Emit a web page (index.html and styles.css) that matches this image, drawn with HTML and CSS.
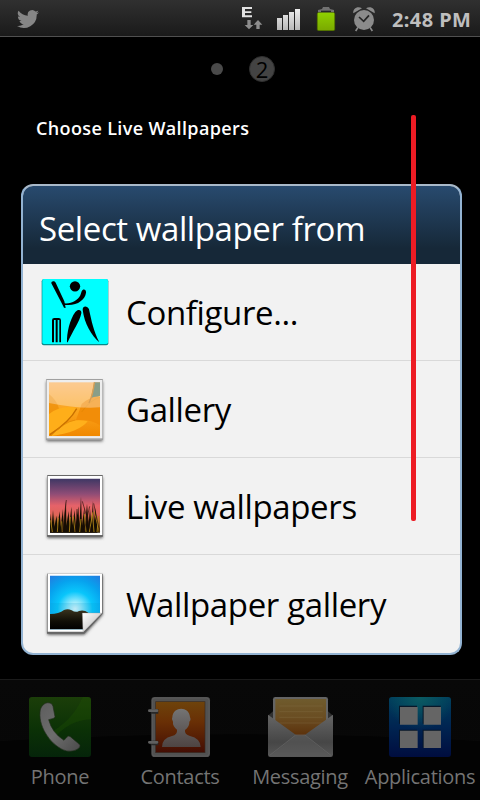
FILE: index.html
```html
<!DOCTYPE html>
<html lang="en">
<head>
<meta charset="utf-8">
<title>Select wallpaper</title>
<link rel="stylesheet" href="styles.css">
</head>
<body>
<div class="phone">
  <header class="status">
    <svg class="bird" viewBox="0 0 24 24"><path fill="#868686" d="M24 4.6a10 10 0 0 1-2.8.8 5 5 0 0 0 2.1-2.7 10 10 0 0 1-3.1 1.2 4.9 4.9 0 0 0-8.4 4.5A14 14 0 0 1 1.7 3.1a4.9 4.9 0 0 0 1.5 6.6 5 5 0 0 1-2.2-.6 4.9 4.9 0 0 0 3.9 4.9 5 5 0 0 1-2.2.1 4.9 4.9 0 0 0 4.6 3.4A10 10 0 0 1 0 19.5 14 14 0 0 0 21.5 7.1 10 10 0 0 0 24 4.6z"/></svg>
    <svg class="signals" viewBox="0 0 480 108">
      <defs>
        <linearGradient id="sig" x2="0" y2="1"><stop stop-color="#eee"/><stop offset="1" stop-color="#b8b8b8"/></linearGradient>
        <linearGradient id="bat" x2="0" y2="1"><stop stop-color="#8fd000"/><stop offset="1" stop-color="#7aa900"/></linearGradient>
      </defs>
      <path fill="#e2e2e2" d="M36 21h30v6H45v7h19v5H45v7h21v6H36z"/>
      <path fill="#8d8d8d" d="M52 60h10v15h8L57 88 44 75h8zM79 87h10V74h8L84 60 71 74h8z"/>
      <path fill="url(#sig)" d="M141 54h15v36h-15zM159 45h15v45h-15zM177 36h15v54h-15zM195 27h15v63h-15z"/>
      <path fill="#727272" d="M264 38v-8l12-3 3-6h18l3 6 12 3v8z"/>
      <path fill="#282828" d="M273 32h30v4h-30z"/>
      <rect x="260.500" y="37" width="55" height="56" rx="5" fill="#476100"/>
      <rect x="263" y="38" width="50" height="53" rx="3" fill="url(#bat)"/>
      <circle cx="402" cy="60" r="30" fill="#8b8b8b"/>
      <path stroke="#8b8b8b" stroke-width="5" d="M384 82l-7 11M420 82l7 11"/>
      <path fill="#8b8b8b" d="M370 40c-3-15 14-24 26-15zM434 40c3-15-14-24-26-15z"/>
      <path fill="none" stroke="#252525" stroke-width="5" d="M387 51l14 13 16-18"/>
    </svg>
    <span class="clock">2:48 PM</span>
  </header>

  <div class="pages"><i class="dot"></i><span class="page">2</span></div>
  <p class="hint">Choose Live Wallpapers</p>

  <main class="dialog">
    <h1>Select wallpaper from</h1>
    <ul>
      <li>
        <svg viewBox="39 0 261 291">
          <rect x="95" y="46" width="200" height="198" rx="6" fill="#078a8a"/>
          <rect x="97" y="45" width="197" height="195" rx="5" fill="#00ffff"/>
          <g fill="#000">
            <circle cx="195" cy="67" r="15.500"/>
            <path d="M124 58c-1-7 9-9 13-2l26 56 4 20-5-1-6-12zM162 118c24 2 41-9 49-24l4-12c4-9 14-6 13 4-3 22-29 42-66 36z"/>
            <path d="M171 235c-1-28 8-68 25-91 8-10 20-7 18 4-5 26-25 51-41 87zM218 137c0-12 14-12 19-1 8 36 13 64 31 99-24-22-45-56-50-98z"/>
            <path d="M126 235v-66q0-7 7-7h13q7 0 7 7v66h-5v-67h-5v67h-6v-67h-5v67z"/>
          </g>
        </svg>
        <span>Configure...</span>
      </li>
      <li>
        <svg viewBox="39 291 261 291">
          <defs>
            <linearGradient id="petal" x2="0" y2="1"><stop stop-color="#fbb25e"/><stop offset=".5" stop-color="#fba51d"/><stop offset="1" stop-color="#f18800"/></linearGradient>
            <filter id="sh" x="-20%" y="-20%" width="140%" height="140%"><feGaussianBlur stdDeviation="4"/></filter>
            <clipPath id="gc"><path d="M117 355h153v162H117z"/></clipPath>
          </defs>
          <rect x="109" y="352" width="169" height="180" fill="#666" filter="url(#sh)"/>
          <rect x="108" y="345" width="171" height="183" rx="2" fill="#a0a0a0"/>
          <rect x="110" y="348" width="167" height="175" fill="#eee"/>
          <g clip-path="url(#gc)">
            <path fill="url(#petal)" d="M117 355h153v162H117z"/>
            <path fill="#527050" d="M253 355h17v40q-20 7-31 24z"/>
            <path fill="#e98600" d="M117 390q25 20 31 47l-31 45z" opacity=".55"/>
            <path fill="#ffae19" d="M117 450q38-28 82-18-6 34-82 78z"/>
            <path fill="#f28d08" d="M215 420q35-30 60-20v90q-20-25-77-22z"/>
            <path fill="#ffb01b" d="M122 516q45-59 111-44-25 33-111 44z"/>
            <path fill="none" stroke="#c87000" stroke-width="4" d="M200 434q-20 38-80 78M253 355q-4 36-16 62"/>
            <path fill="none" stroke="#df8500" stroke-width="2" d="M270 400q-30 8-55 44M123 516q38-42 73-48"/>
            <path fill="#fff" opacity=".32" d="M117 355h153v75q-65 5-153-13z"/>
          </g>
        </svg>
        <span>Gallery</span>
      </li>
      <li>
        <svg viewBox="39 24 261 291">
          <defs>
            <linearGradient id="dusk" x2="0" y2="1"><stop stop-color="#3e3764"/><stop offset=".28" stop-color="#8e4c76"/><stop offset=".5" stop-color="#e66269"/><stop offset=".67" stop-color="#df6558"/><stop offset=".85" stop-color="#8b5a20"/><stop offset="1" stop-color="#281c05"/></linearGradient>
          </defs>
          <rect x="112" y="82" width="166" height="182" fill="#555" filter="url(#sh)"/>
          <rect x="111" y="75" width="168" height="186" rx="3" fill="#686868"/>
          <rect x="113" y="78" width="164" height="177" fill="#fff"/>
          <path fill="url(#dusk)" d="M120 86h150v162H120z"/>
          <path fill="#150d03" d="M120 248v-58l5 42 4-52 4 51 7-34 2 35 7-48 3 48 7-55 1 54 8-78 1 75 7-45 2 44 6-57 3 56 7-46 2 50 9-61 3 58 5-87 3 88 7-57 2 55 6-65 5 60 4-45 4 46 5-70 2 73 5-51 6 50v24z"/>
          <path fill="none" stroke="#b58b16" stroke-width="2.500" d="M127 246l-5-35M142 246l3-42M157 246l-2-32M178 246l3-45M195 246l-5-47M209 246l4-39M228 246l-5-54M238 246l9-52M252 246l-5-59M261 246l5-48M268 246l-15-61"/>
          <path fill="none" stroke="#30150d" stroke-width="2" d="M217 154l27 93M251 160l18 86M169 150l-11 95M239 169l-17 76M201 177l-6 70"/>
        </svg>
        <span>Live wallpapers</span>
      </li>
      <li>
        <svg viewBox="39 315 261 294">
          <defs>
            <radialGradient id="sun" gradientUnits="userSpaceOnUse" cx="195" cy="477" r="125"><stop stop-color="#f0feff"/><stop offset=".15" stop-color="#a5edfc"/><stop offset=".42" stop-color="#09c6fb"/><stop offset=".7" stop-color="#07a2ee"/><stop offset="1" stop-color="#237be0"/></radialGradient>
            <linearGradient id="hill" x2="0" y2="1"><stop stop-color="#39331e"/><stop offset=".6" stop-color="#100e06"/><stop offset="1" stop-color="#000"/></linearGradient>
            <linearGradient id="curl" x2="1" y2="1"><stop stop-color="#fff"/><stop offset=".55" stop-color="#d5d5d5"/></linearGradient>
          </defs>
          <path fill="#555" filter="url(#sh)" d="M112 376h166v118l-55 60H112z"/>
          <path fill="#666" d="M111 371h167v120l-55 60H111z"/>
          <path fill="#fff" d="M113 371h163v117l-56 57H113z"/>
          <path fill="url(#sun)" d="M120 377h150v111l-49 50H120z"/>
          <path fill="#079bd0" opacity=".2" d="M120 459h150v30H120z"/>
          <path fill="url(#hill)" d="M120 492q27 0 42-12 12-5 23 1 12 8 22 2 14-5 28 5l-15 50H120z"/>
          <path fill="url(#curl)" stroke="#999" stroke-width="1" d="M217 489h58l-56 57z"/>
        </svg>
        <span>Wallpaper gallery</span>
      </li>
    </ul>
  </main>

  <nav class="dock">
    <div class="app">
      <svg viewBox="0 30 360 252">
        <defs>
          <linearGradient id="gr" x2="0" y2="1"><stop stop-color="#1b3e09"/><stop offset=".55" stop-color="#0b3106"/><stop offset="1" stop-color="#05240a"/></linearGradient>
          <linearGradient id="hs" x2="1" y2="1"><stop stop-color="#5d5d5d"/><stop offset=".5" stop-color="#6d6d6d"/><stop offset="1" stop-color="#4a4a4a"/></linearGradient>
        </defs>
        <rect x="87" y="81" width="186" height="180" rx="9" fill="url(#gr)"/>
        <path fill="#205604" opacity=".3" d="M248 81h16q9 0 9 9v58q-70 2-120 67l-15-20q80-40 110-114z"/>
        <path fill="url(#hs)" stroke="#202c1b" stroke-width="2" d="M125 110q10-15 25-11 7 1 9 10l6 31q0 5-8 6l-11 3q10 39 46 62l9-10q5-5 10-1l26 22q6 5 1 11-13 13-38 10c-44-12-84-70-80-115 0-8 2-13 5-18z"/>
      </svg>
      <span>Phone</span>
    </div>
    <div class="app">
      <svg viewBox="360 30 360 252">
        <defs>
          <linearGradient id="or" x2="0" y2="1"><stop stop-color="#6e430b"/><stop offset=".4" stop-color="#692f05"/><stop offset="1" stop-color="#430d03"/></linearGradient>
          <linearGradient id="man" x2="0" y2="1"><stop stop-color="#747474"/><stop offset="1" stop-color="#4e4442"/></linearGradient>
        </defs>
        <rect x="454" y="81" width="176" height="180" rx="10" fill="#515151"/>
        <rect x="457" y="84" width="170" height="174" rx="8" fill="none" stroke="#5f5f5f" stroke-width="2"/>
        <rect x="467" y="95" width="148" height="153" fill="url(#or)" stroke="#382c25" stroke-width="2"/>
        <path fill="url(#man)" d="M486 231q0-26 30-33 17-4 15-19-14-12-12-24-6-6-2-13c2-34 51-34 53 0q4 8-2 13 1 15-13 25-2 14 15 18 31 7 32 33z"/>
        <path stroke="#292929" stroke-width="14" d="M452 124h23M452 219h23"/>
        <path stroke="#606060" stroke-width="8" stroke-linecap="round" d="M448 122h23M448 217h23"/>
      </svg>
      <span>Contacts</span>
    </div>
    <div class="app">
      <svg viewBox="0 30 360 252">
        <defs>
          <linearGradient id="pa" x2="0" y2="1"><stop stop-color="#6f5b2d"/><stop offset=".5" stop-color="#6a4d22"/><stop offset="1" stop-color="#5b300b"/></linearGradient>
          <linearGradient id="en" x2="0" y2="1"><stop stop-color="#656565"/><stop offset=".65" stop-color="#464646"/><stop offset="1" stop-color="#585858"/></linearGradient>
        </defs>
        <path fill="#303030" d="M84 137l15-13h165l15 13v60H84z"/>
        <rect x="99" y="81" width="165" height="120" rx="7" fill="#646464"/>
        <path fill="url(#pa)" d="M106 87h152v110H106z"/>
        <path stroke="#806b42" stroke-width="3" opacity=".4" d="M118 108h130M118 125h130M118 142h130M118 159h130"/>
        <path fill="url(#en)" d="M84 134l83 60q14 5 28 0l84-60v120q0 7-7 7H91q-7 0-7-7z"/>
        <path fill="#5c5c5c" opacity=".5" d="M90 259l77-63h28l77 63z"/>
        <path fill="none" stroke="#686868" stroke-width="2" d="M88 257l79-62h28l79 62"/>
      </svg>
      <span>Messaging</span>
    </div>
    <div class="app">
      <svg viewBox="360 30 360 252">
        <defs><linearGradient id="bl" x2="0" y2="1"><stop stop-color="#003e5d"/><stop offset=".5" stop-color="#002451"/><stop offset="1" stop-color="#000d3f"/></linearGradient>
        <radialGradient id="teal" cx=".5" cy="0" r=".55"><stop stop-color="#0a5b62"/><stop offset="1" stop-color="#0a5b62" stop-opacity="0"/></radialGradient></defs>
        <rect x="447" y="81" width="186" height="180" rx="9" fill="url(#bl)"/>
        <rect x="447" y="81" width="186" height="180" rx="9" fill="url(#teal)"/>
        <path fill="#071729" d="M477 107h54v54h-54zM548 107h54v54h-54zM477 179h54v54h-54zM548 179h54v54h-54z"/>
        <path fill="#656565" d="M480 111h53v53h-53zM551 111h52v53h-52zM480 182h53v52h-53zM551 182h52v52h-52z"/>
      </svg>
      <span>Applications</span>
    </div>
  </nav>
  <div class="marker"></div>
</div>
</body>
</html>
```

FILE: styles.css
```css
* { box-sizing: border-box; margin: 0; padding: 0; }
body { background: #000; font-family: "Open Sans", "Noto Sans", sans-serif; }
svg { display: block; flex: none; }
.phone { position: relative; width: 480px; height: 800px; overflow: hidden; display: flex; flex-direction: column; background: #000; }
.status { height: 37px; flex: none; display: flex; background: linear-gradient(#303030, #1a1a1a); border-bottom: 1px solid #505050; }
.bird { width: 22px; height: 22px; margin: 8px 191px 0 17px; }
.signals { width: 160px; height: 36px; }
.clock { font: bold 20px/36px "Noto Sans", sans-serif; color: #bebebe; margin-left: 2px; padding-top: 2px; white-space: nowrap; letter-spacing: .4px; }
.pages { height: 64px; flex: none; display: flex; align-items: center; padding-left: 211px; gap: 26px; }
.dot { width: 12px; height: 12px; border-radius: 50%; background: #4a4a4a; }
.page { width: 26px; height: 26px; border-radius: 50%; background: #434343; border: 1px solid #303030; color: #000; font-size: 22px; line-height: 24px; text-align: center; }
.hint { height: 83px; flex: none; padding: 15px 0 0 36px; color: #fff; font: 600 18px/24px "Open Sans", sans-serif; letter-spacing: .36px; white-space: nowrap; }
.dialog { width: 441px; height: 471px; flex: none; margin-left: 21px; border: 2px solid #93b3d2; border-top-color: #a9b9c9; border-radius: 12px; overflow: hidden; background: #f2f2f2; }
h1 { height: 78px; background: linear-gradient(#284a6e, #162838 80%); color: #fff; font-size: 33px; font-weight: 400; line-height: 46px; padding: 20px 0 0 16px; white-space: nowrap; letter-spacing: -.4px; }
ul { list-style: none; }
li { height: 97px; display: flex; align-items: center; border-bottom: 1px solid #d9d9d9; color: #000; font-size: 33px; letter-spacing: -.36px; white-space: nowrap; }
li:last-child { border: 0; height: 98px; }
li svg { width: 87px; height: 97px; margin-right: 16px; align-self: flex-start; }
li:last-child svg { height: 98px; }
li span { padding-top: 1px; }
.dock { margin-top: 24px; height: 121px; flex: none; display: flex; border-top: 1px solid #1b1b1b; background: radial-gradient(ellipse 520px 60px at 50% 114px, #030303 99%, transparent 100%), linear-gradient(#080808, #070707 60%, #030303); }
.app { width: 120px; text-align: center; color: #747474; font-size: 20px; letter-spacing: -.3px; line-height: 26px; display: flex; flex-direction: column; align-items: center; white-space: nowrap; }
.app svg { width: 120px; height: 84px; }
.marker { position: absolute; left: 411px; top: 115px; width: 5px; height: 406px; border-radius: 2px; background: #ed1c24; }
```
